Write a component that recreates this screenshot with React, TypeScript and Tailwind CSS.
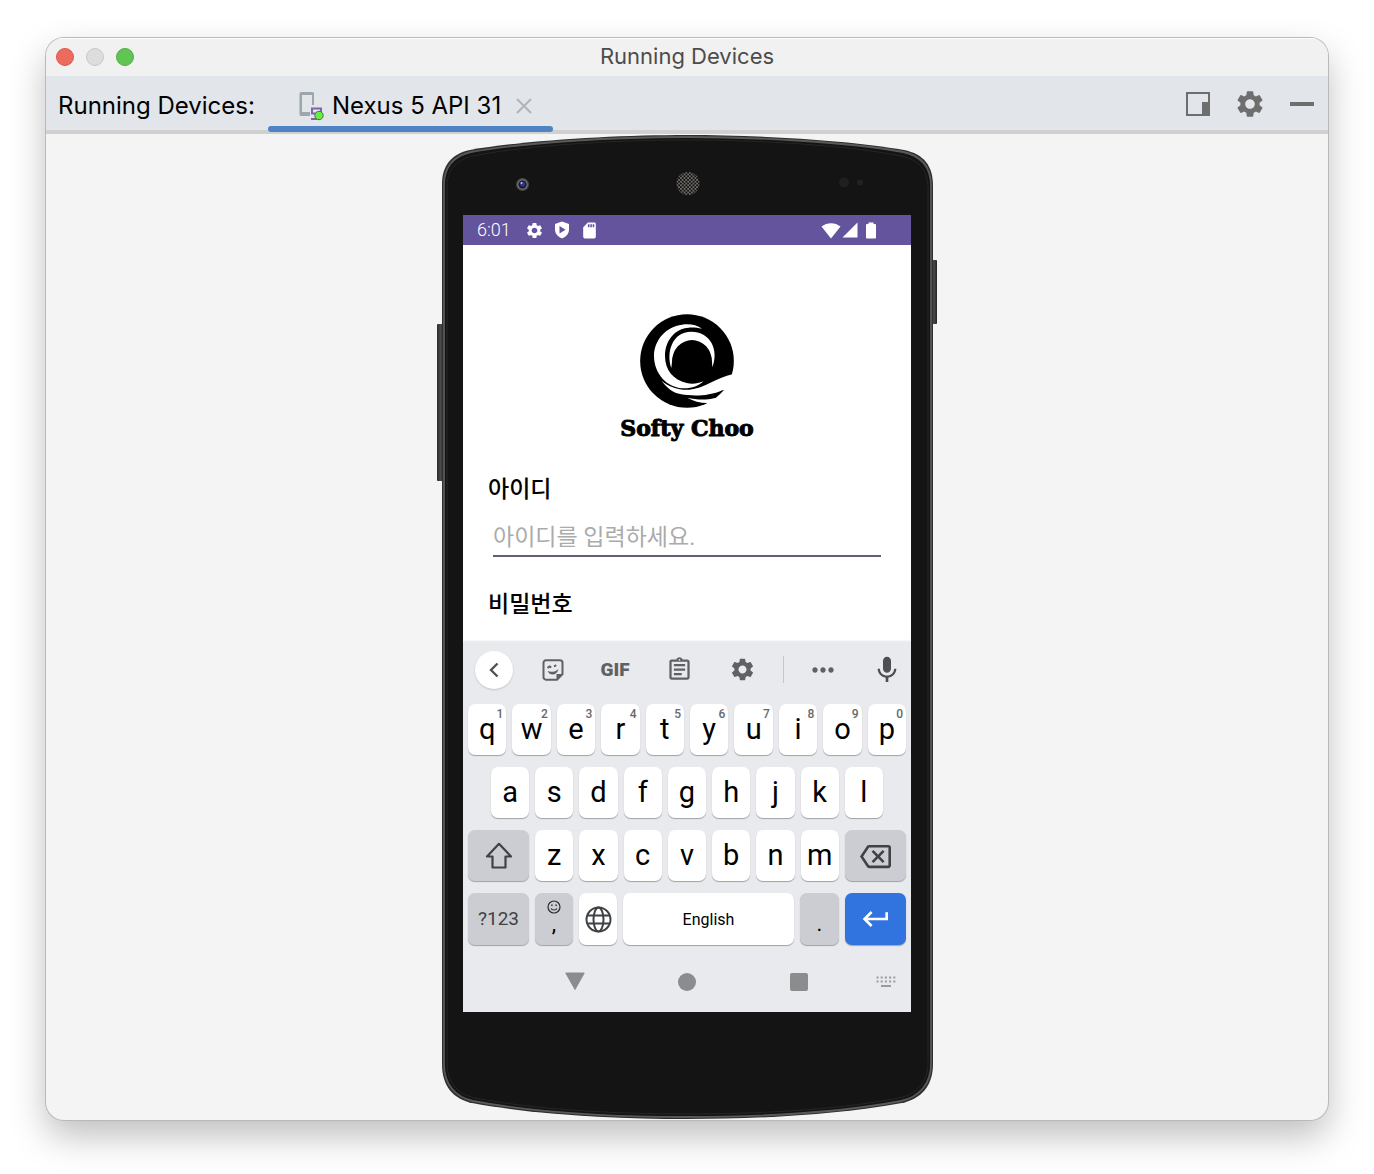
import React from "react";
import {
  MdSettings,
  MdSdCard,
  MdSignalCellular4Bar,
  MdOutlineAssignment,
  MdMoreHoriz,
  MdMic,
  MdOutlineBackspace,
  MdKeyboardReturn,
} from "react-icons/md";

function DeviceTabIcon() {
  return (
    <svg width="26" height="30" viewBox="0 0 26 30" aria-hidden="true">
      <path d="M3 1h10.500a1.500 1.500 0 0 1 1.500 1.500V14h-2V4H3v17h8v4H2a1.500 1.500 0 0 1-1.500-1.500v-21A1.500 1.500 0 0 1 2 1z" fill="#9ba6ae" />
      <path d="M13 22.500v-5h9v4M12 28h6" fill="none" stroke="#8263ad" strokeWidth="2" />
      <path d="M12 22.500h6" stroke="#8263ad" strokeWidth="2" />
      <circle cx="20" cy="24.500" r="4.200" fill="#62f23c" stroke="#50694f" />
    </svg>
  );
}

function PhoneBody() {
  return (
    <svg className="absolute inset-0 h-full w-full" viewBox="0 0 500 986" preserveAspectRatio="none" aria-hidden="true">
      <defs>
        <linearGradient id="side" x1="0" x2="1" y1="0" y2="0">
          <stop offset="0" stopColor="#2b2b2c" />
          <stop offset="0.5" stopColor="#4a4a4b" />
          <stop offset="1" stopColor="#222" />
        </linearGradient>
        <pattern id="mesh" width="3.600" height="3.600" patternUnits="userSpaceOnUse">
          <rect width="3.600" height="3.600" fill="#77746f" />
          <circle cx="0.900" cy="0.900" r="1.100" fill="#111" />
          <circle cx="2.700" cy="2.700" r="1.100" fill="#111" />
        </pattern>
      </defs>
      <rect x="0" y="190" width="7" height="157" rx="1" fill="url(#side)" />
      <rect x="494" y="126" width="6" height="64" rx="1" fill="url(#side)" />
      <path
        d="M5 50C5 32 14 20 33 16C90 6 180 1 250 1S410 6 467 16C487 20 496 32 496 52V930C496 952 484 965 465 969C400 981 320 985 250 985S100 981 35 969C16 965 5 952 5 930Z"
        fill="#2f2f30"
      />
      <path
        d="M7 51C7 34 16 22 34 18C90 8 180 3 250 3S410 8 466 18C485 22 494 34 494 52V930C494 950 482 963 464 967C400 979 320 983 250 983S100 979 36 967C18 963 7 950 7 930Z"
        fill="#141414"
        stroke="#59595a"
        strokeWidth="1.800"
      />
      <path
        d="M10 53C10 37 18 26 36 22C90 11 180 6 250 6S410 11 464 22C483 26 491 37 491 54V929C491 948 480 960 462 964C400 976 320 980 250 980S100 976 38 964C20 960 10 948 10 929Z"
        fill="#141414"
        stroke="#262627"
      />
      <circle cx="85.500" cy="50.500" r="6.500" fill="#4b4946" />
      <circle cx="85.500" cy="50.500" r="5" fill="#8d8b92" />
      <circle cx="85.500" cy="50.500" r="4.200" fill="#1b1a36" />
      <circle cx="85.500" cy="50" r="2.500" fill="#35358c" />
      <circle cx="84.500" cy="49" r="1" fill="#c6c6e8" />
      <circle cx="251" cy="49.500" r="11.500" fill="url(#mesh)" />
      <circle cx="407" cy="48.500" r="5" fill="#1f1f1f" />
      <circle cx="423" cy="48.500" r="3" fill="#222" />
    </svg>
  );
}

function Logo() {
  return (
    <svg width="102" height="102" viewBox="0 0 306 306" role="img" aria-label="Softy Choo logo">
      <circle cx="153" cy="153" r="140.500" fill="#000" />
      <g fill="#fff">
        <path d="M198 56C182 44 160 41 138 44C90 50 54 90 54 138C54 190 92 235 146 235C168 235 188 228 202 214C186 221 168 223 152 219C112 210 87 180 87 138C87 90 118 55 158 53C173 52 186 54 198 56Z" />
        <path d="M106 174C90 128 108 65 166 65C222 65 250 118 229 172L228 155A60 65 0 0 0 108 155Z" />
        <path d="M77 212C100 232 130 241 160 239C205 236 245 201 289 193L306 190L300 240L261 240C215 261 165 258 136 253C108 248 90 230 77 212Z" />
        <path d="M154 263C180 269 208 271 237 264L252 290L215 300L214 279C192 278 172 274 154 263Z" />
      </g>
    </svg>
  );
}

function PlayShield() {
  return (
    <svg width="16" height="18" viewBox="0 0 16 18" aria-hidden="true">
      <path d="M8 0.500L15 3v5.500c0 4-3 7.500-7 9c-4-1.500-7-5-7-9V3z" fill="#fff" />
      <path d="M5.500 5l6 3.700l-6 3.700z" fill="#64539d" />
    </svg>
  );
}

function Wifi() {
  return (
    <svg width="20" height="17" viewBox="0 0 20 17" aria-hidden="true">
      <path d="M0.500 4.500C6 0 14 0 19.500 4.500L10 16.500z" fill="#fff" />
    </svg>
  );
}

function Battery() {
  return (
    <svg width="10" height="17" viewBox="0 0 10 17" fill="#fff" aria-hidden="true">
      <rect x="2.500" y="0.500" width="5" height="3" />
      <rect x="0" y="2" width="10" height="14.500" rx="1" />
    </svg>
  );
}

function Sticker() {
  return (
    <svg width="22" height="22" viewBox="0 0 22 22" fill="none" stroke="#5f6163" strokeWidth="2" aria-hidden="true">
      <path d="M4 1.300h14a2.500 2.500 0 0 1 2.500 2.500V15L15 20.700H4A2.500 2.500 0 0 1 1.500 18V3.800A2.500 2.500 0 0 1 4 1.300z" />
      <path d="M14.500 21v-6h6z" fill="#5f6163" stroke="none" />
      <path d="M5.500 12C8 17.500 15 16.500 16.500 10C13 13 9 13.500 5.500 12z" fill="#5f6163" stroke="none" />
      <path d="M5.500 9l2-1.500l1.800 .8M12 7.500l2.200-1.300" strokeWidth="2" />
    </svg>
  );
}

function Globe() {
  return (
    <svg width="27" height="27" viewBox="0 0 27 27" fill="none" stroke="#3f4144" strokeWidth="2" aria-hidden="true">
      <circle cx="13.500" cy="13.500" r="12" />
      <ellipse cx="13.500" cy="13.500" rx="5" ry="12" />
      <path d="M2.500 9.500h22M2.500 17.500h22" />
    </svg>
  );
}

function Shift() {
  return (
    <svg width="28" height="27" viewBox="0 0 28 27" fill="none" stroke="#3f4144" strokeWidth="2.200" strokeLinejoin="round" aria-hidden="true">
      <path d="M14 1.800L26 14.500h-5.500v11h-13v-11H2z" />
    </svg>
  );
}

function Smile() {
  return (
    <svg width="14" height="14" viewBox="0 0 14 14" fill="none" stroke="#2b2c2e" strokeWidth="1.200" aria-hidden="true">
      <circle cx="7" cy="7" r="6" />
      <path d="M4 8.500c1 2 5 2 6 0" />
      <path d="M4.200 5.200h1.400M8.400 5.200h1.400" strokeWidth="1.500" />
    </svg>
  );
}

function HideKeyboard() {
  return (
    <svg width="20" height="12" viewBox="0 0 20 12" fill="#9a9b9d" aria-hidden="true">
      {[0, 1, 2, 3, 4].map((i) => (
        <g key={i}>
          <rect x={0.5 + i * 4.2} y="0.500" width="2" height="2" />
          <rect x={0.5 + i * 4.2} y="4.500" width="2" height="2" />
        </g>
      ))}
      <rect x="5" y="9" width="10" height="2" />
    </svg>
  );
}

const KEY = "relative flex min-w-0 items-center justify-center rounded-[7px] shadow-[0_1px_1px_#9fa1a5]";

function LetterKey({ label, hint }: { label: string; hint?: string }) {
  return (
    <button className={`${KEY} h-[51px] flex-1 bg-white pb-px text-[29px] leading-none text-black`}>
      {label}
      {hint && <span className="absolute top-1 right-[3px] text-[12px] leading-none font-medium text-[#66686b]">{hint}</span>}
    </button>
  );
}

const TOOL = "flex items-center justify-center";

function Keyboard() {
  return (
    <section aria-label="Keyboard" className="relative bg-[#e8eaed] shadow-[0_-1px_2px_#e4e5e7]">
      <div className="h-[62px] text-[#5f6163]">
        <div className="flex h-[55px] items-center justify-center">
          <div className={`${TOOL} w-[62px]`}>
            <button aria-label="Back" className="flex size-[38px] items-center justify-center rounded-full bg-white shadow-[0_1px_2px_#c3c5c9]">
              <svg width="10" height="16" viewBox="0 0 10 16" fill="none" stroke="#505255" strokeWidth="2.400" aria-hidden="true">
                <path d="M8.500 1.500L2 8l6.500 6.500" />
              </svg>
            </button>
          </div>
          <button aria-label="Stickers" className={`${TOOL} w-[55px]`}><Sticker /></button>
          <button className={`${TOOL} w-[70px] text-[19px] leading-none font-black`}>GIF</button>
          <button aria-label="Clipboard" className={`${TOOL} w-[59px]`}><MdOutlineAssignment size={27} /></button>
          <button aria-label="Settings" className={`${TOOL} w-[67px]`}><MdSettings size={27} /></button>
          <span className={`${TOOL} w-[14px]`}><span className="h-[27px] w-px bg-[#c4c6c9]" /></span>
          <button aria-label="More" className={`${TOOL} w-[65px]`}><MdMoreHoriz size={32} /></button>
          <button aria-label="Voice input" className={`${TOOL} flex-1 pl-2 text-[#4d4f52]`}><MdMic size={32} /></button>
        </div>
      </div>
      <div className="flex flex-col gap-3 px-[5px]">
        <div className="flex gap-[6px]">
          {"qwertyuiop".split("").map((c, i) => (
            <LetterKey key={c} label={c} hint={String((i + 1) % 10)} />
          ))}
        </div>
        <div className="flex gap-[6px] px-[23px]">
          {"asdfghjkl".split("").map((c) => (
            <LetterKey key={c} label={c} />
          ))}
        </div>
        <div className="flex gap-[6px]">
          <button aria-label="Shift" className={`${KEY} h-[51px] w-[61px] bg-[#cccdd2]`}><Shift /></button>
          {"zxcvbnm".split("").map((c) => (
            <LetterKey key={c} label={c} />
          ))}
          <button aria-label="Backspace" className={`${KEY} h-[51px] w-[61px] bg-[#cccdd2] pt-px text-[#3f4144]`}><MdOutlineBackspace size={31} /></button>
        </div>
        <div className="flex gap-[6px]">
          <button className={`${KEY} h-[52px] w-[61px] bg-[#cccdd2] pt-px text-[19px] text-[#3f4144]`}>?123</button>
          <button aria-label="Comma" className={`${KEY} h-[52px] w-[38px] flex-col bg-[#cccdd2] pb-1 text-[22px] leading-5 text-black`}>
            <Smile />
            <span>,</span>
          </button>
          <button aria-label="Language" className={`${KEY} h-[52px] w-[38px] bg-white`}><Globe /></button>
          <button className={`${KEY} h-[52px] flex-1 bg-white pt-px text-[16px] text-black`}>English</button>
          <button className={`${KEY} h-[52px] w-[39px] bg-[#cccdd2] pt-2 text-[22px] text-black`}>.</button>
          <button aria-label="Enter" className={`${KEY} h-[52px] w-[61px] bg-[#3174e0] text-white`}><MdKeyboardReturn size={32} /></button>
        </div>
      </div>
      <nav aria-label="System" className="relative flex h-[67px] items-center justify-center gap-[92px] pt-[7px]">
        <button aria-label="Back" className="flex size-5">
          <svg width="20" height="18" viewBox="0 0 20 18" aria-hidden="true"><path d="M1 .5h18q1 0 .5 1L10.500 17.500q-.5 1-1 0L.5 1.500Q0 .5 1 .5z" fill="#8b8c8e" /></svg>
        </button>
        <button aria-label="Home" className="flex size-5 items-center justify-center">
          <span className="size-[18px] rounded-full bg-[#8b8c8e]" />
        </button>
        <button aria-label="Recents" className="flex size-5 items-center justify-center">
          <span className="size-[18px] rounded-[2px] bg-[#8b8c8e]" />
        </button>
        <button aria-label="Hide keyboard" className="absolute right-[15px]"><HideKeyboard /></button>
      </nav>
    </section>
  );
}

function Screen() {
  return (
    <div className="relative flex h-full flex-col overflow-hidden bg-white font-['Roboto','Noto_Sans_CJK_KR',sans-serif]">
      <div className="flex h-[30px] shrink-0 items-center bg-[#64539d] pr-[35px] pl-[14px] text-white">
        <span className="text-[18px] leading-none font-light">6:01</span>
        <span className="ml-[14px] flex items-center gap-[10px]">
          <MdSettings size={19} />
          <PlayShield />
          <MdSdCard size={19} />
        </span>
        <span className="ml-auto flex items-center">
          <Wifi />
          <MdSignalCellular4Bar size={18} />
          <span className="ml-[7px]"><Battery /></span>
        </span>
      </div>
      <main className="flex flex-1 flex-col px-[25px] pt-[65px]">
        <div className="flex flex-col items-center">
          <Logo />
          <h1 className="font-['DejaVu_Serif',serif] text-[22px] leading-8 font-bold text-black [-webkit-text-stroke:1px_#000]">Softy Choo</h1>
        </div>
        <form className="mt-[30px] flex flex-col text-[23px]" onSubmit={(e) => e.preventDefault()}>
          <label htmlFor="user-id" className="leading-8 font-medium text-black">아이디</label>
          <input
            id="user-id"
            placeholder="아이디를 입력하세요."
            className="mx-[5px] mt-3 h-[39px] border-b-2 border-[#615f78] pt-[2px] outline-none placeholder:text-[#ababab]"
          />
          <span className="mt-8 leading-8 font-medium text-black">비밀번호</span>
        </form>
      </main>
      <Keyboard />
    </div>
  );
}

export default function App() {
  return (
    <div className="min-h-screen bg-white px-[46px] pt-[38px] pb-[54px] font-['Inter',sans-serif]">
      <div className="overflow-hidden rounded-[18px] bg-[#f4f4f4] shadow-[0_0_0_1px_#b9b9b9,0_16px_36px_rgba(0,0,0,0.26)]">
        <header className="relative flex h-[38px] items-center justify-center bg-[#f1f1f1] shadow-[inset_0_1px_0_#fff]">
          <div className="absolute left-[10px] flex gap-3">
            <button aria-label="Close window" className="size-[18px] rounded-full border border-[#d9584d] bg-[#ec6a5e]" />
            <button aria-label="Minimize window" className="size-[18px] rounded-full border border-[#c9c9c9] bg-[#dddddd]" />
            <button aria-label="Zoom window" className="size-[18px] rounded-full border border-[#51ad43] bg-[#61c554]" />
          </div>
          <h2 className="pb-[2px] text-[22px] leading-none text-[#4c4c4c]">Running Devices</h2>
        </header>
        <div className="flex h-[58px] items-start border-b-4 border-[#d0d0d0] bg-[#e2e5ea] pr-[14px] pl-3 text-[24px] leading-none text-black">
          <span className="flex h-[58px] items-center pt-[2px]">Running Devices:</span>
          <div className="ml-[13px] flex h-[56px] flex-col">
            <div className="flex h-[50px] items-center pt-[10px] pr-[21px] pl-[31px]">
              <DeviceTabIcon />
              <button className="ml-[7px]">Nexus 5 API 31</button>
              <button aria-label="Close tab" className="ml-[15px]">
                <svg width="16" height="16" viewBox="0 0 16 16" stroke="#b0b5ba" strokeWidth="2" aria-hidden="true"><path d="M1 1l14 14M15 1L1 15" /></svg>
              </button>
            </div>
            <div className="h-[6px] rounded-full bg-[#4e83c6]" />
          </div>
          <div className="ml-auto flex h-[56px] items-center gap-6 text-[#6e6e6e]">
            <button aria-label="View mode">
              <svg width="24" height="24" viewBox="0 0 24 24" aria-hidden="true">
                <rect x="1" y="1" width="22" height="22" fill="none" stroke="#6e6e6e" strokeWidth="2" />
                <rect x="16" y="10" width="7" height="13" fill="#6e6e6e" />
              </svg>
            </button>
            <button aria-label="Options"><MdSettings size={32} /></button>
            <button aria-label="Hide" className="h-1 w-6 bg-[#6e6e6e]" />
          </div>
        </div>
        <div className="relative mx-auto h-[986px] w-[500px] px-[26px] pt-[81px] pb-[108px]">
          <PhoneBody />
          <Screen />
        </div>
      </div>
    </div>
  );
}
